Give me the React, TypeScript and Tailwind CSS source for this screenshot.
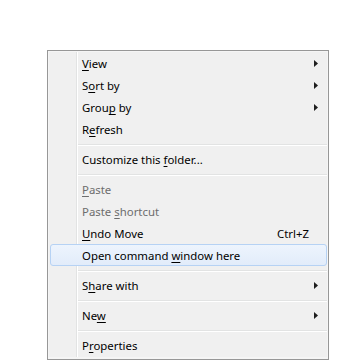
import React from "react";

type Item =
  | { type: "sep" }
  | {
      type: "item";
      pre: string;
      key: string;
      post: string;
      disabled?: boolean;
      arrow?: boolean;
      shortcut?: string;
      hover?: boolean;
    };

const items: Item[] = [
  { type: "item", pre: "", key: "V", post: "iew", arrow: true },
  { type: "item", pre: "S", key: "o", post: "rt by", arrow: true },
  { type: "item", pre: "Grou", key: "p", post: " by", arrow: true },
  { type: "item", pre: "R", key: "e", post: "fresh" },
  { type: "sep" },
  { type: "item", pre: "Customize this ", key: "f", post: "older..." },
  { type: "sep" },
  { type: "item", pre: "", key: "P", post: "aste", disabled: true },
  { type: "item", pre: "Paste ", key: "s", post: "hortcut", disabled: true },
  { type: "item", pre: "", key: "U", post: "ndo Move", shortcut: "Ctrl+Z" },
  { type: "item", pre: "Open command ", key: "w", post: "indow here", hover: true },
  { type: "sep" },
  { type: "item", pre: "S", key: "h", post: "are with", arrow: true },
  { type: "sep" },
  { type: "item", pre: "Ne", key: "w", post: "", arrow: true },
  { type: "sep" },
  { type: "item", pre: "P", key: "r", post: "operties" },
];

function Arrow() {
  return (
    <svg width="4" height="7" viewBox="0 0 4 7" className="block">
      <polygon points="0,0 4,3.5 0,7" fill="#1e1e1e" />
    </svg>
  );
}

export default function App() {
  return (
    <div
      className="w-[348px] h-[362px] bg-white pl-[47px] pt-[50px] overflow-hidden"
      style={{ fontFamily: '"Noto Sans", "Open Sans", sans-serif' }}
    >
      <div className="w-[282px] border border-[#979797] bg-[#f5f5f5] p-px pb-[2px]">
        <div className="bg-[linear-gradient(to_right,#f0f0f0_27px,#e2e3e3_27px,#e2e3e3_28px,#ffffff_28px,#ffffff_29px,#f0f0f0_29px)] flex flex-col pb-px">
          {items.map((it, i) => {
            if (it.type === "sep") {
              return (
                <div key={i} className="h-[8px] pl-[29px] pt-[4px]">
                  <div className="h-px bg-[#e2e3e3]" />
                  <div className="h-px bg-white" />
                </div>
              );
            }
            const base =
              "h-[22px] flex items-center text-[11.4px] leading-none pt-[2px] " +
              (it.disabled ? "text-[#6d6d6d] " : "text-black ");
            const hover = it.hover
              ? "ml-px rounded-[3px] border border-[#b6d2f4] bg-[linear-gradient(to_bottom,#edf4fd,#e2ecfa)] pl-[31px] pr-[17px]"
              : "pl-[33px] pr-[9px]";
            return (
              <div key={i} className={base + hover}>
                <span className="flex-1 whitespace-nowrap">
                  {it.pre}
                  <span className="underline underline-offset-2 decoration-1">{it.key}</span>
                  {it.post}
                </span>
                {it.arrow && (
                  <span className="-mt-[2px]">
                    <Arrow />
                  </span>
                )}
                {it.shortcut && <span className="pr-[9px]">{it.shortcut}</span>}
              </div>
            );
          })}
        </div>
      </div>
    </div>
  );
}
